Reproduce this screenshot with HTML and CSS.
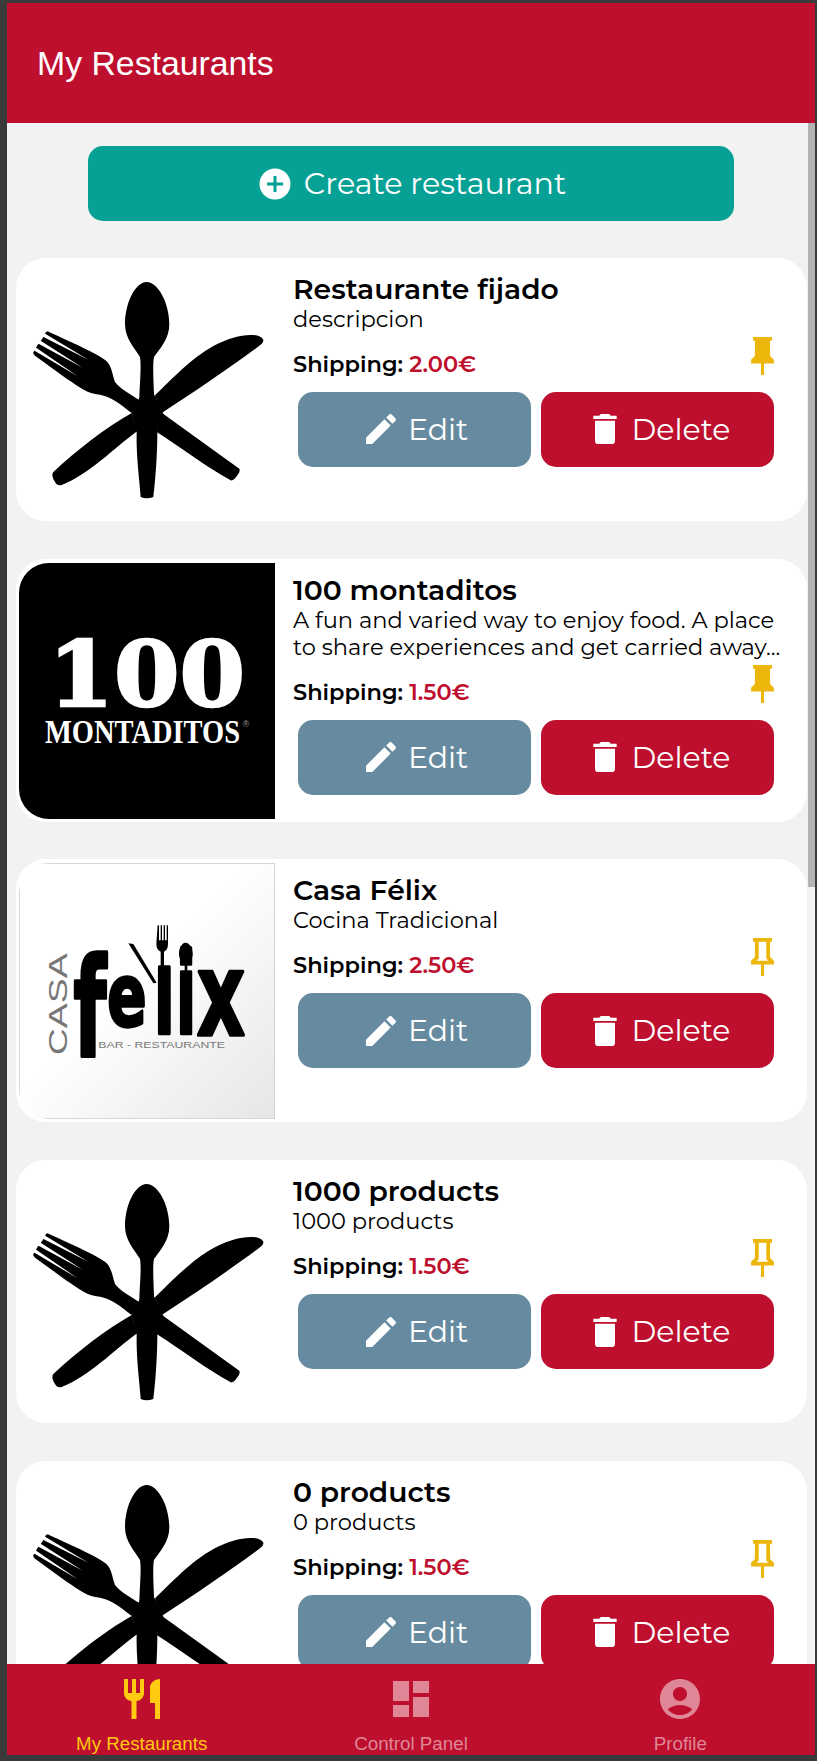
FILE: index.html
```html
<!DOCTYPE html>
<html lang="en">

<head>
    <meta charset="UTF-8">
    <meta name="viewport" content="width=device-width, initial-scale=1.0">
    <title>My Restaurants</title>
    <link rel="stylesheet" href="styles.css">
</head>

<body>
    <!-- shared icons -->
    <svg class="sprite" aria-hidden="true">
        <symbol id="icon-edit" viewBox="0 0 24 24">
            <path d="M3 17.25V21h3.75L17.81 9.94l-3.75-3.75L3 17.25zM20.71 7.04c.39-.39.39-1.02 0-1.41l-2.34-2.34c-.39-.39-1.02-.39-1.41 0l-1.83 1.83 3.75 3.75 1.83-1.83z" />
        </symbol>
        <symbol id="icon-delete" viewBox="0 0 24 24">
            <path d="M19 4h-3.5l-1-1h-5l-1 1H5v2h14V4zM6 19a2 2 0 0 0 2 2h8a2 2 0 0 0 2-2V7H6v12z" />
        </symbol>
        <symbol id="icon-pin" viewBox="6 2 12 20">
            <path d="M16 12V4h1V2H7v2h1v8l-2 2v2h5.2v6h1.6v-6H18v-2l-2-2z" />
        </symbol>
        <symbol id="icon-pin-outline" viewBox="6 2 12 20">
            <path d="M16 12V4h1V2H7v2h1v8l-2 2v2h5.2v6h1.6v-6H18v-2l-2-2zM8.8 14l1.2-1.2V4h4v8.8l1.2 1.2H8.8z" />
        </symbol>
        <!-- default restaurant picture -->
        <symbol id="cutlery" viewBox="57 35 768 768">
            <path d="M440 95C405 95 375 160 375 222C375 265 405 295 420 320C425 350 418 410 418 450L410 545C408 620 420 700 422 740Q440 748 460 740C465 700 472 620 472 545L462 430C460 380 458 340 462 320C480 295 508 265 508 222C508 160 475 95 440 95Z" />
            <path d="M790 268C780 250 740 250 700 262C620 285 560 340 465 435L485 488C590 420 700 345 780 285Q792 276 790 268Z" />
            <path d="M395 488C320 530 230 600 160 665Q152 675 165 695Q172 708 185 704C270 670 340 595 412 542Z" />
            <path d="M485 487L718 655Q722 662 712 675Q702 692 692 690C620 650 540 590 470 545Z" />
            <path d="M143 243C190 265 270 300 310 325C335 340 335 365 345 395C360 415 395 435 420 450L395 488C360 460 330 438 300 433C260 430 240 410 200 385L105 316Q96 308 102 303L112 285L127 265L138 245Z" />
            <path d="M420 440L465 435L490 490L470 545L410 545L395 488Z" />
            <path class="slit" d="M123 256L265 328L128 246ZM110 277L248 352L115 267ZM96 297L233 378L101 287Z" />
        </symbol>
    </svg>

    <div class="app">
        <header class="top-bar">
            <h1>My Restaurants</h1>
        </header>

        <main class="content">
            <button class="create-btn">
                <svg class="create-icon" viewBox="0 0 32 32">
                    <circle cx="16" cy="16" r="15.5" fill="#fff" />
                    <path d="M14.5 8h3v6.5H24v3h-6.500V24h-3v-6.500H8v-3h6.500z" fill="#07a094" />
                </svg>
                Create restaurant
            </button>

            <article class="card">
                <svg class="card-img"><use href="#cutlery" /></svg>
                <div class="card-info">
                    <h2>Restaurante fijado</h2>
                    <p class="desc">descripcion</p>
                    <div class="shipping-row">
                        <p class="shipping">Shipping: <span>2.00€</span></p>
                        <svg class="pin"><use href="#icon-pin" /></svg>
                    </div>
                    <div class="actions">
                        <button class="btn btn-edit"><svg><use href="#icon-edit" /></svg>Edit</button>
                        <button class="btn btn-delete"><svg><use href="#icon-delete" /></svg>Delete</button>
                    </div>
                </div>
            </article>

            <article class="card">
                <svg class="card-img logo-montaditos" viewBox="57 38 768 768">
                    <rect x="57" y="38" width="768" height="768" fill="#000" />
                    <text class="logo-100" x="145" y="466" textLength="590" lengthAdjust="spacingAndGlyphs">100</text>
                    <text class="logo-name" x="135" y="578" textLength="585" lengthAdjust="spacingAndGlyphs">MONTADITOS</text>
                    <text class="logo-reg" x="728" y="530">®</text>
                </svg>
                <div class="card-info">
                    <h2>100 montaditos</h2>
                    <p class="desc">A fun and varied way to enjoy food. A place to share experiences and get carried away...</p>
                    <div class="shipping-row">
                        <p class="shipping">Shipping: <span>1.50€</span></p>
                        <svg class="pin"><use href="#icon-pin" /></svg>
                    </div>
                    <div class="actions">
                        <button class="btn btn-edit"><svg><use href="#icon-edit" /></svg>Edit</button>
                        <button class="btn btn-delete"><svg><use href="#icon-delete" /></svg>Delete</button>
                    </div>
                </div>
            </article>

            <article class="card">
                <svg class="card-img logo-felix" viewBox="57 41 768 768">
                    <defs>
                        <linearGradient id="felix-bg" x1="0" y1="0" x2="1" y2="1">
                            <stop offset="0.45" stop-color="#fff" />
                            <stop offset="1" stop-color="#e6e6e6" />
                        </linearGradient>
                    </defs>
                    <rect x="58" y="42" width="766" height="766" fill="url(#felix-bg)" stroke="#cfcfcf" stroke-width="3" />
                    <text class="felix-casa" transform="translate(200 618) rotate(-90)" textLength="306" lengthAdjust="spacingAndGlyphs">CASA</text>
                    <text class="felix-name">
                        <tspan x="220" y="620" font-size="414" textLength="100" lengthAdjust="spacingAndGlyphs">f</tspan>
                        <tspan x="322" y="530" font-size="264" textLength="118" lengthAdjust="spacingAndGlyphs">e</tspan>
                        <tspan x="462" y="550" font-size="263" textLength="62" lengthAdjust="spacingAndGlyphs">l</tspan>
                        <tspan x="527" y="550" font-size="338" textLength="62" lengthAdjust="spacingAndGlyphs">i</tspan>
                        <tspan x="590" y="556" font-size="345" textLength="145" lengthAdjust="spacingAndGlyphs">x</tspan>
                    </text>
                    <path d="M385 282L400 284L470 400L460 402Z" />
                    <path d="M473 228h4v45h5v-45h4v45h5v-45h4v45h5v-45h4v55q0 18-12 24v45h-10v-45q-13-6-13-24z" />
                    <path d="M556 280c14 0 22 18 22 34c0 14-8 24-16 28v25h-8v-25c-9-4-17-14-17-28c0-16 8-34 19-34z" />
                    <text class="felix-sub" x="295" y="595" textLength="380" lengthAdjust="spacingAndGlyphs">BAR - RESTAURANTE</text>
                </svg>
                <div class="card-info">
                    <h2>Casa Félix</h2>
                    <p class="desc">Cocina Tradicional</p>
                    <div class="shipping-row">
                        <p class="shipping">Shipping: <span>2.50€</span></p>
                        <svg class="pin"><use href="#icon-pin-outline" /></svg>
                    </div>
                    <div class="actions">
                        <button class="btn btn-edit"><svg><use href="#icon-edit" /></svg>Edit</button>
                        <button class="btn btn-delete"><svg><use href="#icon-delete" /></svg>Delete</button>
                    </div>
                </div>
            </article>

            <article class="card">
                <svg class="card-img"><use href="#cutlery" /></svg>
                <div class="card-info">
                    <h2>1000 products</h2>
                    <p class="desc">1000 products</p>
                    <div class="shipping-row">
                        <p class="shipping">Shipping: <span>1.50€</span></p>
                        <svg class="pin"><use href="#icon-pin-outline" /></svg>
                    </div>
                    <div class="actions">
                        <button class="btn btn-edit"><svg><use href="#icon-edit" /></svg>Edit</button>
                        <button class="btn btn-delete"><svg><use href="#icon-delete" /></svg>Delete</button>
                    </div>
                </div>
            </article>

            <article class="card">
                <svg class="card-img"><use href="#cutlery" /></svg>
                <div class="card-info">
                    <h2>0 products</h2>
                    <p class="desc">0 products</p>
                    <div class="shipping-row">
                        <p class="shipping">Shipping: <span>1.50€</span></p>
                        <svg class="pin"><use href="#icon-pin-outline" /></svg>
                    </div>
                    <div class="actions">
                        <button class="btn btn-edit"><svg><use href="#icon-edit" /></svg>Edit</button>
                        <button class="btn btn-delete"><svg><use href="#icon-delete" /></svg>Delete</button>
                    </div>
                </div>
            </article>

            <div class="scroll-thumb"></div>
        </main>

        <nav class="tabs">
            <div class="tab tab-active">
                <svg viewBox="0 0 24 24"><path d="M11 9H9V2H7v7H5V2H3v7c0 2.120 1.660 3.840 3.750 3.970V22h2.500v-9.030C11.340 12.840 13 11.120 13 9V2h-2v7zm5-3v8h2.500v8H21V2c-2.760 0-5 2.240-5 4z" /></svg>
                <span>My Restaurants</span>
            </div>
            <div class="tab">
                <svg viewBox="0 0 24 24"><path d="M3 13h8V3H3v10zm0 8h8v-6H3v6zm10 0h8V11h-8v10zm0-18v6h8V3h-8z" /></svg>
                <span>Control Panel</span>
            </div>
            <div class="tab">
                <svg viewBox="0 0 24 24"><path d="M12 2C6.480 2 2 6.480 2 12s4.480 10 10 10 10-4.480 10-10S17.520 2 12 2zm0 4c1.930 0 3.500 1.570 3.500 3.500S13.930 13 12 13s-3.500-1.570-3.500-3.500S10.070 6 12 6zm0 14c-2.030 0-4.430-.82-6.140-2.880C7.550 15.800 9.680 15 12 15s4.450.8 6.140 2.120C16.430 19.180 14.030 20 12 20z" /></svg>
                <span>Profile</span>
            </div>
        </nav>
    </div>
</body>

</html>
```

FILE: styles.css
```css
* {
    box-sizing: border-box;
}

html,
body {
    height: 100%;
}

body {
    margin: 0;
    padding: 3px 2px 6px 7px;
    background-color: #3a3a3a;
    overflow: hidden;
    font-family: Montserrat, Inter, "Noto Sans", sans-serif;
}

.sprite {
    display: none;
}

.app {
    height: 100%;
    display: flex;
    flex-direction: column;
    background-color: #f2f2f2;
}

.top-bar {
    height: 120px;
    flex: none;
    display: flex;
    align-items: center;
    padding-left: 30px;
    background-color: #be0f2e;
}

.top-bar h1 {
    margin: 0;
    font-family: "Liberation Sans", Arial, sans-serif;
    font-size: 33.8px;
    font-weight: 400;
    color: #fff;
}

.content {
    flex: 1;
    min-height: 0;
    position: relative;
    overflow: hidden;
    padding: 23px 8px 0 9px;
    display: flex;
    flex-direction: column;
    gap: 37.8px;
}

.scroll-thumb {
    position: absolute;
    top: 0;
    right: 0;
    width: 7px;
    height: 764px;
    background-color: #b4b4b4;
}

.create-btn {
    width: 646px;
    height: 75px;
    flex: none;
    margin: 0 0 -1px 72px;
    display: flex;
    align-items: center;
    justify-content: center;
    gap: 13px;
    padding: 0 0 0 3px;
    border: none;
    border-radius: 15px;
    background-color: #07a094;
    color: #fff;
    font-family: inherit;
    font-size: 30.2px;
}

.create-icon {
    width: 32px;
    height: 32px;
}

.card {
    height: 263px;
    flex: none;
    display: flex;
    align-items: flex-start;
    padding: 4px 0 0 3px;
    border-radius: 30px;
    background-color: #fff;
}

.card-img {
    width: 256px;
    height: 256px;
    flex: none;
    border-radius: 30px 0 0 30px;
}

.slit {
    fill: #fff;
}

.logo-100 {
    font-family: "DejaVu Serif", serif;
    font-weight: 700;
    font-size: 270px;
    fill: #fff;
    stroke: #fff;
    stroke-width: 7px;
}

.logo-name {
    font-family: "Liberation Serif", serif;
    font-weight: 700;
    font-size: 100px;
    fill: #fff;
}

.logo-reg {
    font-family: "Liberation Sans", sans-serif;
    font-size: 26px;
    fill: #999;
}

.felix-casa {
    font-family: "Liberation Sans", sans-serif;
    font-size: 76px;
    fill: #777;
}

.felix-name {
    font-family: "DejaVu Sans", sans-serif;
    font-weight: 700;
    fill: #000;
    stroke: #000;
    stroke-width: 10px;
    stroke-linejoin: round;
}

.felix-sub {
    font-family: "Liberation Sans", sans-serif;
    font-size: 26px;
    fill: #777;
}

.card-info {
    flex: 1;
    min-width: 0;
    padding: 12px 33px 0 18px;
}

.card-info h2 {
    margin: 0 0 2px;
    font-size: 28.2px;
    line-height: 30px;
    font-weight: 600;
    color: #000;
}

.desc {
    margin: 0 -14px 0 0;
    font-size: 22.55px;
    line-height: 27px;
    color: #000;
}

.shipping-row {
    height: 39px;
    margin-top: 4px;
    display: flex;
    justify-content: space-between;
    align-items: flex-start;
}

.shipping {
    margin: 15px 0 0;
    font-size: 22.5px;
    line-height: 24px;
    font-weight: 600;
    color: #000;
}

.shipping span {
    color: #be0f2e;
}

.pin {
    width: 23px;
    height: 38px;
    fill: #edb60a;
}

.actions {
    display: flex;
    gap: 10px;
    margin: 16px 0 0 5px;
}

.btn {
    width: 233px;
    height: 75px;
    display: flex;
    align-items: center;
    justify-content: center;
    gap: 7px;
    padding: 0;
    border: none;
    border-radius: 15px;
    color: #fff;
    font-family: inherit;
    font-size: 30px;
}

.btn svg {
    width: 40px;
    height: 40px;
    fill: #fff;
}

.btn-edit {
    background-color: #668ba0;
}

.btn-delete {
    background-color: #be0f2e;
}

.tabs {
    height: 91px;
    flex: none;
    display: flex;
    position: relative;
    background-color: #be0f2e;
}

.tab {
    flex: 1;
    display: flex;
    flex-direction: column;
    align-items: center;
    padding-top: 11px;
    gap: 10px;
    color: #df8797;
    fill: #df8797;
    font-family: "Liberation Sans", Arial, sans-serif;
    font-size: 18.75px;
    line-height: 21px;
}

.tab svg {
    width: 48px;
    height: 48px;
}

.tab-active {
    color: #ffca10;
    fill: #ffca10;
}
```
